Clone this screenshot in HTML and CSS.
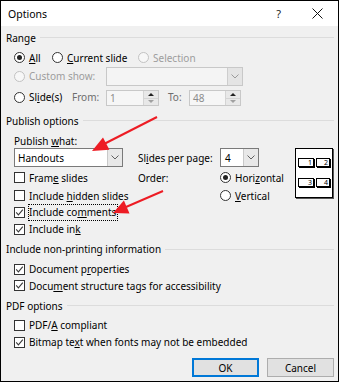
FILE: index.html
```html
<!DOCTYPE html>
<html lang="en">
<head>
  <meta charset="UTF-8" />
  <title>Options</title>
  <link rel="stylesheet" href="styles.css">
</head>
<body>
  <div class="dialog">
    <div class="title-bar">
      <span class="title">Options</span>
      <span class="title-help">?</span>
      <span class="title-close">
        <svg width="11" height="11" viewBox="0 0 11 11"><path d="M0.5 0.5 L10.5 10.5 M10.5 0.5 L0.5 10.5" stroke="#111" stroke-width="1" fill="none"/></svg>
      </span>
    </div>

    <div class="dialog-body">
      <!-- Range -->
      <div class="group-head h-range">Range</div>
      <div class="row r-all">
        <span class="opt w-all"><span class="radio on"></span><span><u>A</u>ll</span></span>
        <span class="opt w-current"><span class="radio"></span><span><u>C</u>urrent slide</span></span>
        <span class="opt disabled"><span class="radio off"></span><span>Selection</span></span>
      </div>
      <div class="row r-custom">
        <span class="opt w-custom disabled"><span class="radio off"></span><span>Custom show:</span></span>
        <div class="combo combo-off w-show">
          <span class="combo-text"></span>
          <span class="combo-btn"><svg width="8" height="5" viewBox="0 0 8 5"><path d="M0.5 0.5 L4 4 L7.5 0.5" stroke="#9a9a9a" fill="none"/></svg></span>
        </div>
      </div>
      <div class="row r-slides">
        <span class="opt w-slides"><span class="radio"></span><span>Sl<u>i</u>de(s)</span></span>
        <span class="lbl-gray w-from">From:</span>
        <div class="spin w-spin1">
          <span class="spin-text">1</span>
          <span class="spin-btns">
            <span class="spin-up"></span>
            <span class="spin-down"></span>
          </span>
        </div>
        <span class="lbl-gray w-to">To:</span>
        <div class="spin w-spin2">
          <span class="spin-text">48</span>
          <span class="spin-btns">
            <span class="spin-up"></span>
            <span class="spin-down"></span>
          </span>
        </div>
      </div>

      <!-- Publish options -->
      <div class="group-head h-publish">Publish options</div>
      <div class="publish-grid">
        <div class="cell c-what"><span>Publish <u>w</u>hat:</span></div>
        <div class="combo combo-on w-handouts c-handouts">
          <span class="combo-text">Handouts</span>
          <span class="combo-btn"><svg width="8" height="5" viewBox="0 0 8 5"><path d="M0.5 0.5 L4 4 L7.5 0.5" stroke="#606060" fill="none"/></svg></span>
        </div>
        <div class="cell c-frame"><span class="check"></span><span>Fram<u>e</u> slides</span></div>
        <div class="cell c-hidden"><span class="check"></span><span>Include <u>h</u>idden slides</span></div>
        <div class="cell c-comments"><span class="check on"><svg width="9" height="9" viewBox="0 0 9 9"><path d="M1.2 4.4 L3.4 6.8 L7.8 1.6" stroke="#3a3a3a" stroke-width="1.1" fill="none"/></svg></span><span class="focus">Include co<u>m</u>ments</span></div>
        <div class="cell c-ink"><span class="check on"><svg width="9" height="9" viewBox="0 0 9 9"><path d="M1.2 4.4 L3.4 6.8 L7.8 1.6" stroke="#3a3a3a" stroke-width="1.1" fill="none"/></svg></span><span>Include in<u>k</u></span></div>

        <div class="cell c-per"><span>Sl<u>i</u>des per page:</span></div>
        <div class="combo combo-on w-per c-percombo">
          <span class="combo-text">4</span>
          <span class="combo-btn"><svg width="8" height="5" viewBox="0 0 8 5"><path d="M0.5 0.5 L4 4 L7.5 0.5" stroke="#606060" fill="none"/></svg></span>
        </div>
        <div class="cell c-order"><span>Order:</span></div>
        <div class="cell c-horiz"><span class="radio on"></span><span>Hori<u>z</u>ontal</span></div>
        <div class="cell c-vert"><span class="radio"></span><span><u>V</u>ertical</span></div>

        <div class="preview">
          <div class="mini">1</div>
          <div class="mini">2</div>
          <div class="mini">3</div>
          <div class="mini">4</div>
        </div>
      </div>

      <!-- Non-printing -->
      <div class="group-head h-nonprint">Include non-printing information</div>
      <div class="row r-docprops">
        <span class="check on"><svg width="9" height="9" viewBox="0 0 9 9"><path d="M1.2 4.4 L3.4 6.8 L7.8 1.6" stroke="#3a3a3a" stroke-width="1.1" fill="none"/></svg></span>
        <span>Document p<u>r</u>operties</span>
      </div>
      <div class="row r-struct">
        <span class="check on"><svg width="9" height="9" viewBox="0 0 9 9"><path d="M1.2 4.4 L3.4 6.8 L7.8 1.6" stroke="#3a3a3a" stroke-width="1.1" fill="none"/></svg></span>
        <span>Docu<u>m</u>ent structure tags for accessibility</span>
      </div>

      <!-- PDF -->
      <div class="group-head h-pdf">PDF options</div>
      <div class="row r-pdfa">
        <span class="check"></span>
        <span>PDF/<u>A</u> compliant</span>
      </div>
      <div class="row r-bitmap">
        <span class="check on"><svg width="9" height="9" viewBox="0 0 9 9"><path d="M1.2 4.4 L3.4 6.8 L7.8 1.6" stroke="#3a3a3a" stroke-width="1.1" fill="none"/></svg></span>
        <span>Bitmap te<u>x</u>t when fonts may not be embedded</span>
      </div>

      <div class="buttons">
        <button class="btn btn-default">OK</button>
        <button class="btn">Cancel</button>
      </div>
    </div>

    <!-- annotation arrows drawn over the dialog -->
    <svg class="arrows" width="339" height="382" viewBox="0 0 339 382">
      <line x1="157" y1="117" x2="104" y2="144" stroke="#ed1c24" stroke-width="2"/>
      <polygon points="92,151 103,137.4 109.4,149.8" fill="#ed1c24"/>
      <line x1="163" y1="191" x2="126" y2="207" stroke="#ed1c24" stroke-width="2"/>
      <polygon points="113,213 123.9,200.6 129.5,213.4" fill="#ed1c24"/>
    </svg>
  </div>
</body>
</html>
```

FILE: styles.css
```css
* {
  box-sizing: border-box;
}

html, body {
  margin: 0;
  padding: 0;
  background: #f0f0f0;
}

body {
  font-family: 'Noto Sans', 'Open Sans', sans-serif;
  font-size: 10px;
  color: #000;
}

u {
  text-decoration-thickness: 1px;
  text-underline-offset: 1px;
}

.dialog {
  position: relative;
  width: 339px;
  height: 382px;
  border: 1px solid #000;
  background: #f0f0f0;
  display: flex;
  flex-direction: column;
}

/* title bar */
.title-bar {
  height: 25px;
  background: #fff;
  display: flex;
  align-items: center;
  padding: 0 15px 0 7px;
  flex-shrink: 0;
}

.title {
  font-size: 10.5px;
}

.title-help {
  margin-left: auto;
  font-size: 11px;
  color: #222;
}

.title-close {
  margin-left: 31px;
  display: flex;
}

.dialog-body {
  padding: 0 4px 0 5px;
  display: flex;
  flex-direction: column;
}

/* group headings with etched line */
.group-head {
  display: flex;
  align-items: center;
}

.group-head::after {
  content: "";
  flex: 1;
  margin-left: 4px;
  border-top: 1px solid #dcdcdc;
}

.h-range { height: 23px; }
.h-publish { height: 25px; }
.h-nonprint { height: 24px; }
.h-pdf { height: 23px; }

.row {
  display: flex;
  align-items: center;
  padding-left: 8px;
}

.r-all { height: 17px; }
.r-custom { height: 20px; }
.r-slides { height: 22px; }
.r-docprops { height: 16px; }
.r-struct { height: 17px; }
.r-pdfa { height: 16px; }
.r-bitmap { height: 18px; }

.opt {
  display: flex;
  align-items: center;
}

.w-all { width: 38px; }
.w-current { width: 86px; }
.w-custom { width: 92px; }
.w-slides { width: 58px; }
.w-from { width: 34px; }
.w-to { width: 21px; margin-left: 9px; }

.disabled {
  color: #9d9d9d;
}

.lbl-gray {
  color: #6d6d6d;
}

/* radios and checkboxes */
.radio {
  width: 11px;
  height: 11px;
  border: 1px solid #333;
  border-radius: 50%;
  background: #fff;
  margin-right: 4px;
  flex-shrink: 0;
  display: flex;
  align-items: center;
  justify-content: center;
}

.radio.on::after {
  content: "";
  width: 5px;
  height: 5px;
  border-radius: 50%;
  background: #222;
}

.radio.off {
  border-color: #c2c2c2;
  background: #f7f7f7;
}

.check {
  width: 11px;
  height: 11px;
  border: 1px solid #333;
  background: #fff;
  margin-right: 4px;
  flex-shrink: 0;
  display: flex;
  align-items: center;
  justify-content: center;
}

.check svg {
  display: block;
}

.focus {
  margin-left: -1px;
  border: 1px dotted #000;
  line-height: 15px;
  padding-right: 1px;
}

/* combo boxes */
.combo {
  height: 19px;
  display: flex;
  border: 1px solid #7a7a7a;
  background: #fff;
}

.combo-text {
  flex: 1;
  display: flex;
  align-items: center;
  padding-left: 3px;
}

.combo-btn {
  width: 15px;
  display: flex;
  align-items: center;
  justify-content: center;
  background: #e8e8e8;
  border-left: 1px solid #c9c9c9;
}

.combo-off {
  border-color: #c8c8c8;
  background: #f4f4f4;
}

.combo-off .combo-btn {
  background: #e4e4e4;
  border-left-color: #cdcdcd;
}

.w-show { width: 137px; }
.w-handouts { width: 109px; }
.w-per { width: 39px; }
.w-per .combo-text { padding-left: 4px; }

/* spin boxes */
.spin {
  height: 16px;
  display: flex;
  border: 1px solid #c8c8c8;
  background: #f6f6f6;
  color: #8c8c8c;
  margin-top: 2px;
}

.spin-text {
  flex: 1;
  display: flex;
  align-items: center;
  padding-left: 3px;
}

.spin-btns {
  width: 15px;
  display: flex;
  flex-direction: column;
  border-left: 1px solid #d4d4d4;
}

.spin-up,
.spin-down {
  flex: 1;
  display: flex;
  align-items: center;
  justify-content: center;
  background: #e8e8e8;
}

.spin-up {
  border-bottom: 1px solid #d4d4d4;
}

.spin-up::after {
  content: "";
  border-left: 3px solid transparent;
  border-right: 3px solid transparent;
  border-bottom: 3px solid #222;
}

.spin-down::after {
  content: "";
  border-left: 3px solid transparent;
  border-right: 3px solid transparent;
  border-top: 3px solid #a0a0a0;
}

.w-spin1 { width: 53px; }
.w-spin2 { width: 52px; }

/* publish options grid */
.publish-grid {
  display: grid;
  padding-left: 8px;
  grid-template-columns: 124px 82px 75px 39px;
  grid-template-rows: 15px 19px 21px 15px 18px 16px;
}

.cell {
  display: flex;
  align-items: center;
}

.c-what { grid-column: 1; grid-row: 1; }
.c-handouts { grid-column: 1; grid-row: 2; }
.c-frame { grid-column: 1; grid-row: 3; }
.c-hidden { grid-column: 1; grid-row: 4; }
.c-comments { grid-column: 1; grid-row: 5; }
.c-ink { grid-column: 1; grid-row: 6; }
.c-per { grid-column: 2; grid-row: 2; }
.c-percombo { grid-column: 3; grid-row: 2; }
.c-order { grid-column: 2; grid-row: 3; }
.c-horiz { grid-column: 3; grid-row: 3; }
.c-vert { grid-column: 3; grid-row: 4; }

.preview {
  grid-column: 4;
  grid-row: 2 / span 4;
  align-self: start;
  width: 38px;
  height: 50px;
  background: #fff;
  border: 1px solid #000;
  box-shadow: 1px 1px 0 #555;
  display: grid;
  grid-template-columns: 16px 14px;
  grid-template-rows: 9px 9px;
  column-gap: 2px;
  row-gap: 11px;
  padding: 9px 0 0 2px;
  align-content: start;
}

.mini {
  border: 1px solid #000;
  box-shadow: 1px 1px 0 #000;
  font-size: 7px;
  line-height: 7px;
  display: flex;
  align-items: center;
  justify-content: flex-end;
  padding-right: 1px;
  overflow: visible;
}

/* buttons */
.buttons {
  display: flex;
  justify-content: flex-end;
  gap: 8px;
  margin-top: 7px;
}

.btn {
  width: 67px;
  height: 19px;
  padding: 0;
  font-family: inherit;
  font-size: 10px;
  color: #000;
  background: #e1e1e1;
  border: 1px solid #adadad;
}

.btn-default {
  border-color: #0078d7;
  box-shadow: inset 0 0 0 1px #0078d7;
}

.arrows {
  position: absolute;
  left: -1px;
  top: -1px;
  pointer-events: none;
}
```
